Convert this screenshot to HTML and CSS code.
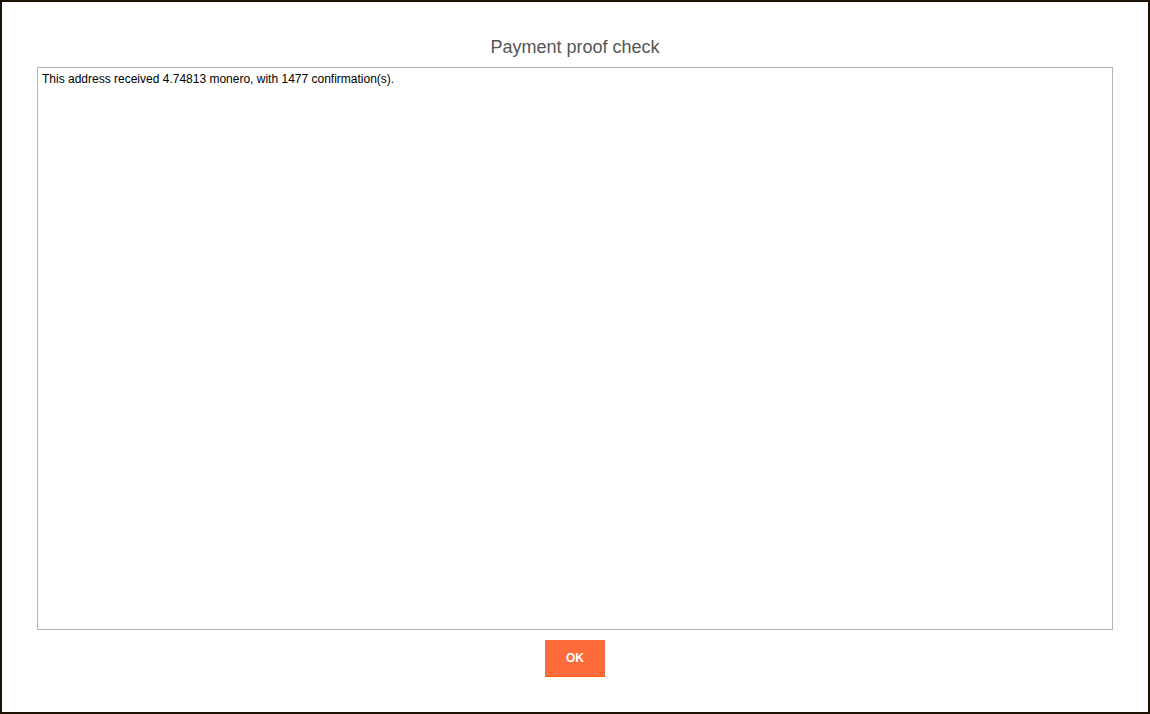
FILE: index.html
```html
<!DOCTYPE html>
<html>
<head>
<meta charset="utf-8">
<link rel="stylesheet" href="styles.css">
</head>
<body>
<div class="frame">
  <h1 class="title">Payment proof check</h1>
  <div class="content">This address received 4.74813 monero, with 1477 confirmation(s).</div>
  <div class="actions">
    <button class="ok">OK</button>
  </div>
</div>
</body>
</html>
```
FILE: styles.css
```css
html, body {
  margin: 0;
  padding: 0;
  background: #fff;
}
.frame {
  box-sizing: border-box;
  width: 1150px;
  height: 714px;
  border: 2px solid #1c1206;
  padding: 0 35px;
  display: flex;
  flex-direction: column;
  font-family: "Liberation Sans", Arial, sans-serif;
}
.title {
  margin: 34px 0 0;
  height: 31px;
  font-size: 18px;
  font-weight: normal;
  line-height: 22px;
  color: #555;
  text-align: center;
}
.content {
  box-sizing: border-box;
  height: 563px;
  border: 1px solid #b4b4b4;
  padding: 4px 4px;
  font-size: 12px;
  line-height: 14px;
  color: #000;
}
.actions {
  display: flex;
  justify-content: center;
  margin-top: 10px;
}
.ok {
  box-sizing: border-box;
  width: 60px;
  height: 37px;
  border: 0;
  border-bottom: 1px solid #ff5414;
  background: #ff6c3c;
  color: #fff;
  font-family: "Liberation Sans", Arial, sans-serif;
  font-weight: bold;
  font-size: 12px;
  padding: 0;
}
```
